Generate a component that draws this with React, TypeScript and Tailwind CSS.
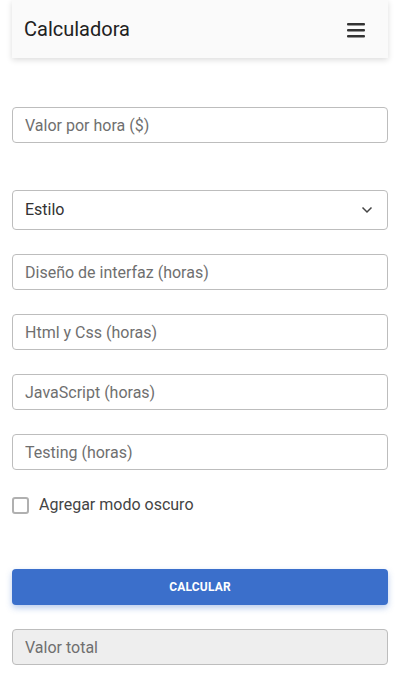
import React from "react";

const baseCls =
  "block w-full h-[36px] rounded-[4px] border border-[#bdbdbd] px-[12px] text-[16px] text-[#333] placeholder:text-[#6f6f6f] outline-none";
const inputCls = `${baseCls} bg-white`;

export default function App() {
  return (
    <div className="min-h-[689px] bg-white px-[12px]" style={{ fontFamily: "Roboto, 'Liberation Sans', sans-serif" }}>
      <header className="flex h-[58px] items-center justify-between bg-[#fafafa] pl-[12px] pr-[23px] shadow-[0_2px_6px_rgba(0,0,0,0.14)]">
        <h1 className="text-[20px] font-normal text-[#212121]">Calculadora</h1>
        <svg width="18" height="16" viewBox="0 0 18 16" className="mt-[1px]">
          <rect x="0" y="1" width="18" height="2.4" rx="1" fill="#333" />
          <rect x="0" y="7" width="18" height="2.4" rx="1" fill="#333" />
          <rect x="0" y="13" width="18" height="2.4" rx="1" fill="#333" />
        </svg>
      </header>

      <div className="mt-[49px]">
        <input className={`${inputCls} h-[35px]`} placeholder="Valor por hora ($)" />
      </div>

      <div className="relative mt-[47px]">
        <div className="flex h-[40px] w-full items-center justify-between rounded-[4px] border border-[#bdbdbd] bg-white px-[12px] text-[16px] text-[#333]">
          <span>Estilo</span>
          <svg width="12" height="8" viewBox="0 0 12 8" className="mr-[2px]">
            <path d="M1.5 1.5 L6 6 L10.5 1.5" fill="none" stroke="#444" strokeWidth="1.5" />
          </svg>
        </div>
      </div>

      <div className="mt-[24px] flex flex-col gap-[24px]">
        <input className={inputCls} placeholder="Diseño de interfaz (horas)" />
        <input className={inputCls} placeholder="Html y Css (horas)" />
        <input className={inputCls} placeholder="JavaScript (horas)" />
        <input className={inputCls} placeholder="Testing (horas)" />
      </div>

      <label className="mt-[23px] flex items-center gap-[10px]">
        <span className="block h-[17px] w-[17px] rounded-[3px] border-2 border-[#b0b0b0] bg-white" />
        <span className="text-[16px] text-[#444]">Agregar modo oscuro</span>
      </label>

      <button className="mt-[52px] flex h-[36px] w-full items-center justify-center rounded-[4px] bg-[#3b6fcb] text-[12px] font-bold tracking-[0.2px] text-white shadow-[0_3px_6px_rgba(59,111,203,0.35)]">
        CALCULAR
      </button>

      <div className="mt-[24px]">
        <input
          className={`${baseCls} bg-[#eeeeee]`}
          placeholder="Valor total"
          readOnly
        />
      </div>
    </div>
  );
}
